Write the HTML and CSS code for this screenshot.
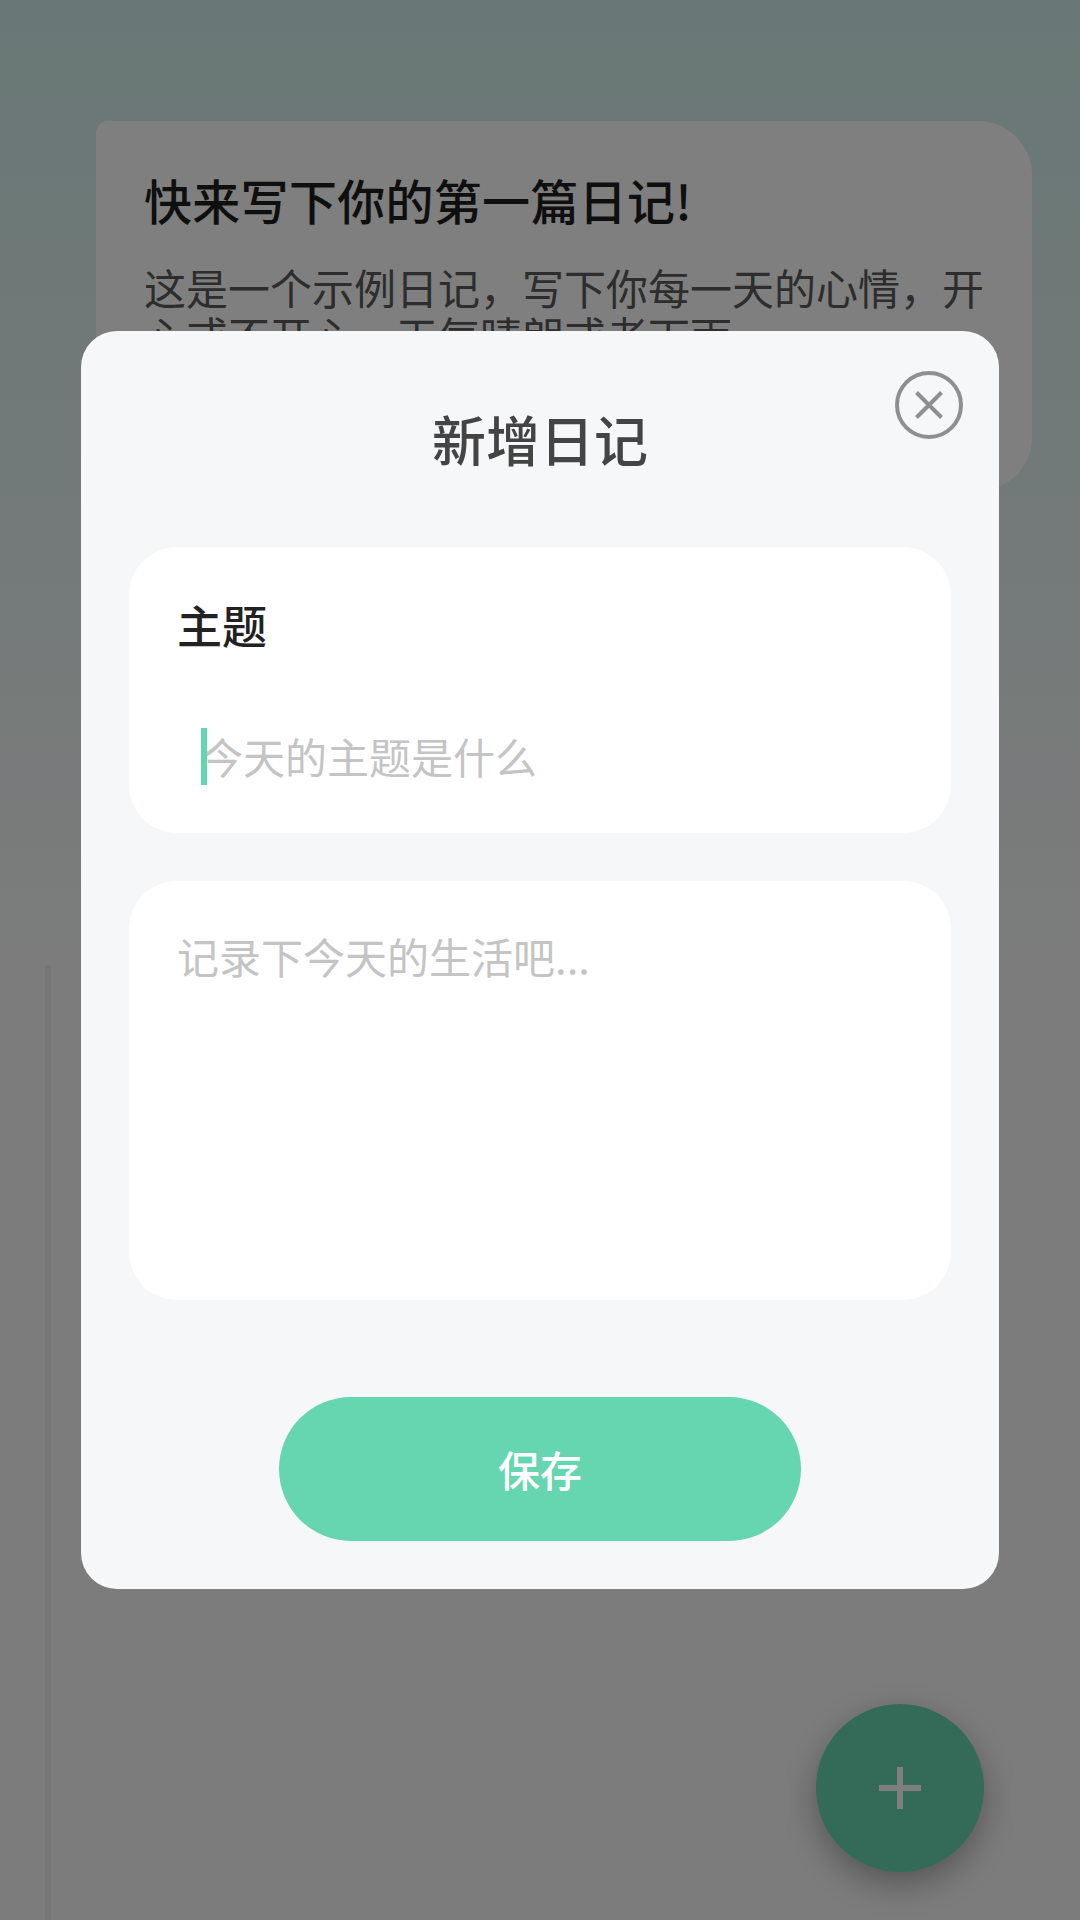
FILE: index.html
```html
<!DOCTYPE html>
<html lang="zh-CN">
<head>
<meta charset="utf-8">
<title>新增日记</title>
<link rel="stylesheet" href="styles.css">
</head>
<body>
<div class="app">
  <div class="timeline"></div>
  <article class="entry">
    <h2 class="entry-title">快来写下你的第一篇日记!</h2>
    <p class="entry-body">这是一个示例日记，写下你每一天的心情，开心或不开心，天气晴朗或者下雨</p>
  </article>
  <button class="fab" type="button" aria-label="新增">
    <svg class="fab-icon" viewBox="0 0 42 42"><path d="M18 0h6v18h18v6H24v18h-6V24H0v-6h18z"/></svg>
  </button>
  <div class="scrim">
    <section class="dialog">
      <button class="close" type="button" aria-label="关闭">
        <svg viewBox="0 0 68 68"><circle cx="34" cy="34" r="32" fill="none" stroke="#8f8f8f" stroke-width="4"/><path d="M21.5 21.5l25 25M46.5 21.5l-25 25" fill="none" stroke="#8f8f8f" stroke-width="4"/></svg>
      </button>
      <h1 class="dialog-title">新增日记</h1>
      <div class="field field-subject">
        <label class="field-label" for="subject">主题</label>
        <div class="input-wrap">
          <span class="caret"></span>
          <input class="input" id="subject" type="text" placeholder="今天的主题是什么">
        </div>
      </div>
      <div class="field field-content">
        <textarea class="textarea" placeholder="记录下今天的生活吧..."></textarea>
      </div>
      <button class="save" type="button">保存</button>
    </section>
  </div>
</div>
</body>
</html>
```

FILE: styles.css
```css
* { box-sizing: border-box; }
html, body { margin: 0; padding: 0; }
body { font-family: "Noto Sans CJK SC", "Noto Sans", sans-serif; }

.app {
  position: relative;
  width: 1080px;
  height: 1920px;
  overflow: hidden;
  padding: 121px 48px 0 96px;
  background: linear-gradient(180deg, #d2f0ec 0, #f8f8f8 960px);
}

.timeline {
  position: absolute;
  left: 45px;
  top: 965px;
  bottom: 0;
  width: 6px;
  background: #eeeeee;
}

.entry {
  height: 370px;
  padding: 46px 48px 0 48px;
  background: #fff;
  border-radius: 12px 54px 54px 12px;
}
.entry-title {
  margin: 0;
  font-size: 48px;
  line-height: 64px;
  font-weight: 500;
  letter-spacing: .3px;
  color: #1e1e1e;
}
.entry-body {
  margin: 32px 0 0;
  font-size: 42px;
  line-height: 48px;
  color: #5a5a5a;
}

.fab {
  position: absolute;
  left: 816px;
  top: 1704px;
  width: 168px;
  height: 168px;
  display: flex;
  align-items: center;
  justify-content: center;
  padding: 0;
  border: 0;
  border-radius: 50%;
  background: #66d6b0;
  box-shadow: 0 12px 32px rgba(0, 0, 0, .3);
}
.fab-icon { width: 42px; height: 42px; fill: #fff; display: block; }

.scrim {
  position: absolute;
  inset: 0;
  padding: 331px 81px 0;
  background: rgba(0, 0, 0, .5);
}

.dialog {
  position: relative;
  height: 1258px;
  padding: 0 48px;
  display: flex;
  flex-direction: column;
  background: #f5f7f9;
  border-radius: 36px;
}
.dialog-title {
  margin: 0;
  height: 216px;
  padding-top: 68px;
  font-size: 54px;
  line-height: 80px;
  font-weight: 500;
  text-align: center;
  color: #444;
}

.close {
  position: absolute;
  right: 36px;
  top: 40px;
  width: 68px;
  height: 68px;
  padding: 0;
  border: 0;
  background: none;
}
.close svg { display: block; width: 68px; height: 68px; }

.field {
  background: #fff;
  border-radius: 48px;
}
.field-subject {
  height: 286px;
  padding: 46px 48px 0;
}
.field-content {
  height: 419px;
  margin-top: 48px;
  padding: 44px 48px 48px;
}
.field-label {
  display: block;
  font-size: 45px;
  line-height: 64px;
  font-weight: 500;
  color: #222;
}
.input-wrap {
  position: relative;
  margin: 71px 0 0 24px;
  height: 57px;
}
.caret {
  position: absolute;
  left: 0;
  top: 0;
  width: 6px;
  height: 57px;
  background: #66d6b0;
}
.input, .textarea {
  display: block;
  width: 100%;
  padding: 0;
  border: 0;
  outline: 0;
  background: transparent;
  font-family: inherit;
  font-size: 42px;
  color: #222;
  resize: none;
}
.input { height: 57px; line-height: 55px; padding-bottom: 2px; }
.textarea { height: 100%; line-height: 61px; }
.input::placeholder, .textarea::placeholder { color: #c4c4c4; opacity: 1; }

.save {
  display: block;
  width: 522px;
  height: 144px;
  margin: 97px auto 0;
  padding: 0 0 2px;
  border: 0;
  border-radius: 72px;
  background: #66d6b0;
  font-family: inherit;
  font-size: 42px;
  font-weight: 500;
  color: #fff;
}
```
